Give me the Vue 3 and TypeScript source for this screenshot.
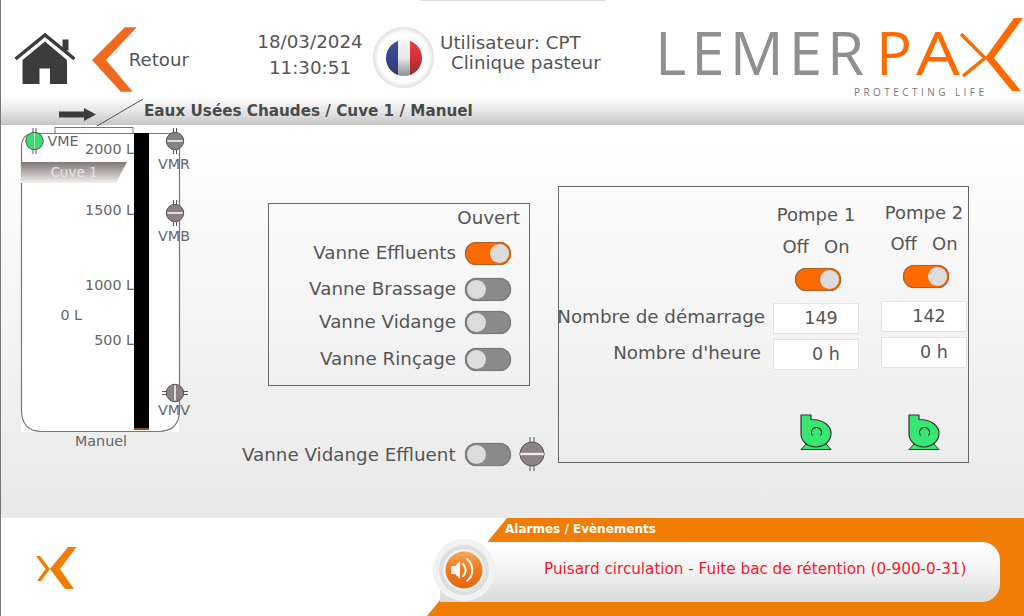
<script setup lang="ts">
interface Valve {
  name: string
  x: number
  y: number
  fill: string
  barAngle: number
  pinAngle: number
  labelX: number
  labelY: number
}

const levels = [
  { text: '2000 L', x: 134, y: 154 },
  { text: '1500 L', x: 134, y: 215 },
  { text: '1000 L', x: 134, y: 290 },
  { text: '500 L', x: 134, y: 345 },
  { text: '0 L', x: 82, y: 320 },
]

const valves: Valve[] = [
  { name: 'VME', x: 34.5, y: 141, fill: '#35e06c', barAngle: 90, pinAngle: 0, labelX: 63, labelY: 146 },
  { name: 'VMR', x: 175, y: 141, fill: '#8b8381', barAngle: 0, pinAngle: 0, labelX: 174, labelY: 169 },
  { name: 'VMB', x: 175, y: 213, fill: '#8b8381', barAngle: 0, pinAngle: 0, labelX: 174, labelY: 241 },
  { name: 'VMV', x: 175, y: 393, fill: '#8b8381', barAngle: 90, pinAngle: 90, labelX: 174, labelY: 415 },
]

const vannes = [
  { label: 'Vanne Effluents', on: true },
  { label: 'Vanne Brassage', on: false },
  { label: 'Vanne Vidange', on: false },
  { label: 'Vanne Rinçage', on: false },
]

const pompes = [
  { name: 'Pompe 1', demarrage: '149', heures: '0 h' },
  { name: 'Pompe 2', demarrage: '142', heures: '0 h' },
]
</script>

<template>
  <div class="app">
    <header class="header">
      <svg class="home" viewBox="14 33 62 52" width="62" height="52">
        <polyline points="15.5,59 45,35 74.5,59" fill="none" stroke="#3c3c3c" stroke-width="3.5" />
        <rect x="62.5" y="39.5" width="6" height="11" fill="#3c3c3c" />
        <path d="M22.5 60 45 41.5 67 60V84H50V68.5H39.5V84H22.5Z" fill="#3c3c3c" />
      </svg>
      <div class="back">
        <svg viewBox="92 27 45 65" width="45" height="65">
          <polygon points="125,27 137,27 106,60 133,92 121,92 92,60" fill="#ef6a1e" />
        </svg>
        <span>Retour</span>
      </div>
      <div class="datetime">
        <div>18/03/2024</div>
        <div>11:30:51</div>
      </div>
      <div class="flag-ring">
        <div class="flag">
          <i class="blue"></i><i class="white"></i><i class="red"></i>
        </div>
      </div>
      <div class="user">
        <div>Utilisateur: CPT</div>
        <div class="site">Clinique pasteur</div>
      </div>
      <svg class="logo" viewBox="660 0 364 100" width="364" height="100">
        <text x="655" y="75" class="logo-word" fill="#8f8f8f" textLength="209">LEMER</text>
        <text x="876" y="75" class="logo-word" fill="#ff6a00" textLength="36" lengthAdjust="spacingAndGlyphs">P</text>
        <text x="916" y="75" class="logo-word" fill="#ff6a00" textLength="44" lengthAdjust="spacingAndGlyphs">A</text>
        <polygon points="1014,18 1023,18 994,58 1021,91 1012,91 985,58" fill="#ff6a00" />
        <polyline points="961,34 985,58 963,76" fill="none" stroke="#ff6a00" stroke-width="3.5" />
        <text x="854" y="96" class="logo-sub" fill="#777" textLength="130">PROTECTING LIFE</text>
      </svg>
    </header>

    <div class="crumb">
      <svg class="crumb-deco" viewBox="59 97 85 29" width="85" height="29">
        <path d="M59 111.5H84V108L96 114.5 84 121V117.5H59Z" fill="#3c3c3c" />
        <line x1="97" y1="126" x2="143" y2="99" stroke="#555" stroke-width="1" />
      </svg>
      <span>Eaux Usées Chaudes / Cuve 1 / Manuel</span>
    </div>

    <main class="main">
      <svg class="tank" viewBox="1 125 210 330" width="210" height="330">
        <defs>
          <linearGradient id="banner" x1="0" y1="0" x2="0" y2="1">
            <stop offset="0" stop-color="#7f7876" />
            <stop offset="0.7" stop-color="#cfcac7" />
            <stop offset="1" stop-color="#f2f0ee" />
          </linearGradient>
        </defs>
        <rect x="55" y="127.5" width="78" height="8" fill="none" stroke="#777" />
        <rect x="21" y="400" width="158" height="32" fill="#fff" />
        <path d="M21.5 146Q22 133.5 35 133.5H170Q179.5 133.5 179.5 143V410Q179.5 431.5 158 431.5H42Q21.5 431.5 21.5 410Z"
          fill="#fff" stroke="#777" stroke-width="1.2" />
        <rect x="134" y="133" width="15" height="297" fill="#000" />
        <rect x="134" y="428" width="15" height="2" fill="#a04a10" />
        <polygon points="21,162 127,162 116,183 21,183" fill="url(#banner)" />
        <text x="74" y="177" text-anchor="middle" class="t-cuve">Cuve 1</text>
        <text v-for="l in levels" :key="l.text" :x="l.x" :y="l.y" text-anchor="end" class="t-tank">{{ l.text }}</text>
        <g v-for="v in valves" :key="v.name">
          <g :transform="`translate(${v.x} ${v.y})`">
            <g :transform="`rotate(${v.pinAngle})`" stroke="#555" stroke-width="1">
              <line x1="-1.5" y1="-13" x2="-1.5" y2="13" />
              <line x1="1.5" y1="-13" x2="1.5" y2="13" />
            </g>
            <circle r="8.7" :fill="v.fill" stroke="#555" stroke-width="1" />
            <rect x="-8" y="-1.2" width="16" height="2.4" fill="#e4e4e4" stroke="#666" stroke-width="0.5"
              :transform="`rotate(${v.barAngle})`" />
          </g>
          <text :x="v.labelX" :y="v.labelY" text-anchor="middle" class="t-tank">{{ v.name }}</text>
        </g>
        <text x="101" y="446" text-anchor="middle" class="t-tank">Manuel</text>
      </svg>

      <section class="center">
        <div class="vannes">
          <div class="ouvert">Ouvert</div>
          <div v-for="v in vannes" :key="v.label" class="vanne-row">
            <span>{{ v.label }}</span>
            <div class="toggle" :class="{ on: v.on }"><b></b></div>
          </div>
        </div>
        <div class="vidange">
          <span>Vanne Vidange Effluent</span>
          <div class="toggle"><b></b></div>
          <svg viewBox="-13 -18 26 36" width="26" height="36">
            <g stroke="#555" stroke-width="1">
              <line x1="-2" y1="-17" x2="-2" y2="17" />
              <line x1="2" y1="-17" x2="2" y2="17" />
            </g>
            <circle r="12" fill="#8b8381" stroke="#555" />
            <rect x="-12" y="-1.6" width="24" height="3.2" fill="#eee" stroke="#666" stroke-width="0.5" />
          </svg>
        </div>
      </section>

      <section class="pompes">
        <div class="pompe-labels">
          <div class="lab-start">Nombre de démarrage</div>
          <div class="lab-hours">Nombre d'heure</div>
        </div>
        <div v-for="p in pompes" :key="p.name" class="pompe">
          <div class="pompe-name">{{ p.name }}</div>
          <div class="off-on"><span>Off</span><span>On</span></div>
          <div class="toggle on"><b></b></div>
          <div class="field start">{{ p.demarrage }}</div>
          <div class="field hours">{{ p.heures }}</div>
          <svg class="pump-icon" viewBox="0 0 32 36" width="32" height="36">
            <path d="M7 29 1 35.5H31L25 29Z" fill="#38e672" stroke="#333" stroke-width="1" stroke-linejoin="round" />
            <path d="M1 1H11V5.5C24 5.5 31 12 31 19.5 31 27 24 33 16 33 7 33 1 27 1 19.5Z" fill="#38e672" stroke="#333"
              stroke-width="1.2" stroke-linejoin="round" />
            <path d="M12.5 21.5A5 5 0 1 1 20.5 21.5" fill="none" stroke="#333" stroke-width="1.2" />
          </svg>
        </div>
      </section>
    </main>

    <footer class="footer">
      <svg class="foot-logo" viewBox="36 547 41 43" width="41" height="43">
        <polygon points="68,547 76.6,547 60,569 74,589 65,589 50,569" fill="#f07d05" />
        <polygon points="36,556 40,556 50,569 41,581 37,581 45.6,569" fill="#f07d05" />
      </svg>
      <div class="alarm">
        <div class="alarm-bg"></div>
        <div class="alarm-title">Alarmes / Evènements</div>
        <div class="alarm-pill">Puisard circulation - Fuite bac de rétention (0-900-0-31)</div>
        <svg class="speaker" viewBox="-32 -32 64 64" width="64" height="64">
          <defs>
            <linearGradient id="disc" x1="0" y1="0" x2="0" y2="1">
              <stop offset="0" stop-color="#f6a659" />
              <stop offset="0.5" stop-color="#ef7a1c" />
              <stop offset="1" stop-color="#e8640e" />
            </linearGradient>
          </defs>
          <circle r="31" fill="#f2f2f2" />
          <circle r="25" fill="#dedede" />
          <circle r="21" fill="#f2f2f2" />
          <circle r="18.5" fill="url(#disc)" />
          <path d="M-13-4H-9L-4-9V9L-9 4H-13Z" fill="#f4f4f4" />
          <path d="M-1-6A8 8 0 0 1-1 6M3-11A14 14 0 0 1 3 11" fill="none" stroke="#fff" stroke-width="2" stroke-linecap="round" />
        </svg>
      </div>
    </footer>
  </div>
</template>

<style scoped>
.app {
  position: relative;
  width: 1024px;
  height: 616px;
  box-sizing: border-box;
  border-left: 1px solid #777;
  overflow: hidden;
  font-family: "DejaVu Sans", sans-serif;
  color: #555;
  background: #fff;
}

.header {
  position: relative;
  display: flex;
  height: 97px;
  padding-left: 13px;
  box-sizing: border-box;
  background: #fff;
}

.header::before {
  content: '';
  position: absolute;
  left: 419px;
  top: 0;
  width: 186px;
  height: 1px;
  background: #ddd;
}

.home {
  margin-top: 33px;
  flex-shrink: 0;
}

.back {
  display: flex;
  align-items: center;
  width: 97px;
  margin-left: 16px;
  margin-top: 27px;
  height: 65px;
  font-size: 18.2px;
}

.back span {
  margin-left: -8px;
}

.datetime {
  width: 120px;
  margin-left: 61px;
  margin-top: 29px;
  text-align: center;
  font-size: 18.3px;
  line-height: 26px;
}

.flag-ring {
  width: 61px;
  height: 61px;
  margin-left: 3px;
  margin-top: 27px;
  border-radius: 50%;
  background: radial-gradient(circle at 50% 50%, #fff 58%, #dcdcdc 72%, #ececec 88%, #f8f8f8 100%);
  display: flex;
  align-items: center;
  justify-content: center;
}

.flag {
  position: relative;
  display: flex;
  width: 36px;
  height: 36px;
  border-radius: 50%;
  overflow: hidden;
}

.flag i {
  flex: 1;
}

.flag .blue {
  background: #2d3d8e;
}

.flag .white {
  background: #f4f4f4;
}

.flag .red {
  background: #e3262e;
}

.flag::after {
  content: '';
  position: absolute;
  inset: 0;
  background: linear-gradient(180deg, rgba(255, 255, 255, 0.1) 0%, rgba(120, 120, 120, 0.1) 50%, rgba(60, 60, 60, 0.55) 100%);
}

.user {
  margin-left: 6px;
  margin-top: 33px;
  font-size: 18.3px;
  line-height: 20px;
  white-space: nowrap;
}

.user .site {
  margin-left: 11px;
}

.logo {
  position: absolute;
  right: 0;
  top: 0;
  overflow: visible;
}

.logo-word {
  font-family: "Open Sans", sans-serif;
  font-weight: 400;
  font-size: 60px;
}

.logo-sub {
  font-family: "Open Sans", sans-serif;
  font-size: 10px;
}

.crumb {
  display: flex;
  align-items: center;
  height: 28px;
  padding-left: 58px;
  background: linear-gradient(180deg, #fff 0%, #e6e6e6 50%, #c6c6c6 100%);
  font-size: 15.2px;
  font-weight: 700;
  color: #4a4a4a;
}

.crumb-deco {
  flex-shrink: 0;
  overflow: visible;
}

.main {
  display: flex;
  height: 393px;
  background: linear-gradient(180deg, #fff 0%, #e9e9e9 100%);
}

.tank {
  flex-shrink: 0;
}

.t-tank {
  font-size: 14.3px;
  fill: #666;
}

.t-cuve {
  font-size: 13.5px;
  fill: #e4e2e0;
}

.center {
  width: 288px;
  margin-left: 31px;
  flex-shrink: 0;
}

.vannes {
  box-sizing: border-box;
  width: 262px;
  height: 183px;
  margin-top: 78px;
  margin-left: 26px;
  padding-right: 18px;
  border: 1.5px solid #666;
}

.ouvert {
  margin-right: -9px;
  margin-top: 3px;
  height: 22px;
  line-height: 22px;
  text-align: right;
  font-size: 18.3px;
}

.vanne-row {
  display: flex;
  align-items: center;
  justify-content: flex-end;
  gap: 9px;
  height: 23px;
  font-size: 18.3px;
  white-space: nowrap;
}

.vanne-row:nth-of-type(2) {
  margin-top: 13px;
}

.vanne-row:nth-of-type(3) {
  margin-top: 13px;
}

.vanne-row:nth-of-type(4) {
  margin-top: 10px;
}

.vanne-row:nth-of-type(5) {
  margin-top: 14px;
}

.vanne-row span {
  margin-top: -3px;
}

.toggle {
  position: relative;
  flex-shrink: 0;
  box-sizing: border-box;
  width: 46px;
  height: 23px;
  border-radius: 12px;
  background: #8a8a8a;
  box-shadow: inset 0 0 0 1px #777, 0 0 1px #888;
}

.toggle b {
  position: absolute;
  left: 2px;
  top: 2px;
  width: 19px;
  height: 19px;
  border-radius: 50%;
  background: #dcdcdc;
}

.toggle.on {
  background: #ff6a00;
  box-shadow: inset 0 0 0 1px #a8632c, 0 0 1px #888;
}

.toggle.on b {
  left: 25px;
}

.vidange {
  display: flex;
  align-items: center;
  margin-top: 50px;
  width: 310px;
  height: 36px;
  font-size: 18.3px;
  white-space: nowrap;
}

.vidange .toggle {
  margin-left: 9px;
}

.vidange svg {
  margin-left: 8px;
  flex-shrink: 0;
}

.pompes {
  display: flex;
  box-sizing: border-box;
  width: 411px;
  height: 277px;
  margin-top: 61px;
  margin-left: 28px;
  border: 1.5px solid #666;
  flex-shrink: 0;
}

.pompe-labels {
  flex-shrink: 0;
  width: 206px;
  margin-top: 114px;
  text-align: right;
  font-size: 18.3px;
  white-space: nowrap;
}

.pompe-labels > div {
  display: flex;
  justify-content: flex-end;
  align-items: center;
  height: 31px;
}

.lab-hours {
  margin-top: 5px;
  padding-right: 4px;
}

.pompe {
  display: flex;
  flex-direction: column;
  align-items: center;
  width: 86px;
  margin-left: 8px;
  font-size: 18px;
}

.pompe + .pompe {
  margin-left: 22px;
  margin-right: -2px;
}

.pompe-name {
  height: 20px;
  line-height: 20px;
  margin-top: 18px;
  white-space: nowrap;
}

.off-on {
  display: flex;
  gap: 15px;
  height: 20px;
  line-height: 20px;
  margin-top: 12px;
}

.pompe .toggle {
  margin-top: 11px;
  margin-left: 4px;
}

.field {
  box-sizing: border-box;
  width: 86px;
  height: 31px;
  line-height: 28px;
  background: #fff;
  border: 1px solid #e2e2e2;
  text-align: center;
  font-size: 17.5px;
}

.field.start {
  margin-top: 12px;
  padding-left: 10px;
}

.field.hours {
  margin-top: 5px;
  padding-left: 20px;
}

.pump-icon {
  margin-top: 44px;
  flex-shrink: 0;
}

.pompe + .pompe .pompe-name {
  margin-top: 16px;
}

.pompe + .pompe .off-on {
  margin-top: 11px;
}

.pompe + .pompe .field.start {
  margin-top: 13px;
}

.pompe + .pompe .pump-icon {
  margin-top: 46px;
}

.footer {
  display: flex;
  height: 98px;
  background: #fff;
}

.foot-logo {
  position: absolute;
  left: 35px;
  bottom: 26px;
  z-index: 1;
}

.alarm {
  position: relative;
  width: 1023px;
  height: 98px;
}

.alarm-bg {
  position: absolute;
  inset: 0;
  background: #f07d05;
  clip-path: polygon(506px 0, 100% 0, 100% 100%, 426px 100%);
}

.alarm-title {
  position: relative;
  margin-left: 504px;
  height: 24px;
  line-height: 23px;
  font-size: 12px;
  font-weight: 700;
  color: #fff;
}

.alarm-pill {
  position: relative;
  box-sizing: border-box;
  width: 560px;
  height: 60px;
  margin-left: 439px;
  padding-left: 104px;
  line-height: 54px;
  border-radius: 0 18px 18px 0;
  background: linear-gradient(180deg, #fff 0%, #f4f4f4 45%, #dadada 100%);
  font-size: 15.2px;
  color: #f5182a;
  white-space: nowrap;
}

.speaker {
  position: absolute;
  left: 431px;
  top: 20px;
}
</style>

<style>
html,
body {
  margin: 0;
  background: #fff;
}
</style>
